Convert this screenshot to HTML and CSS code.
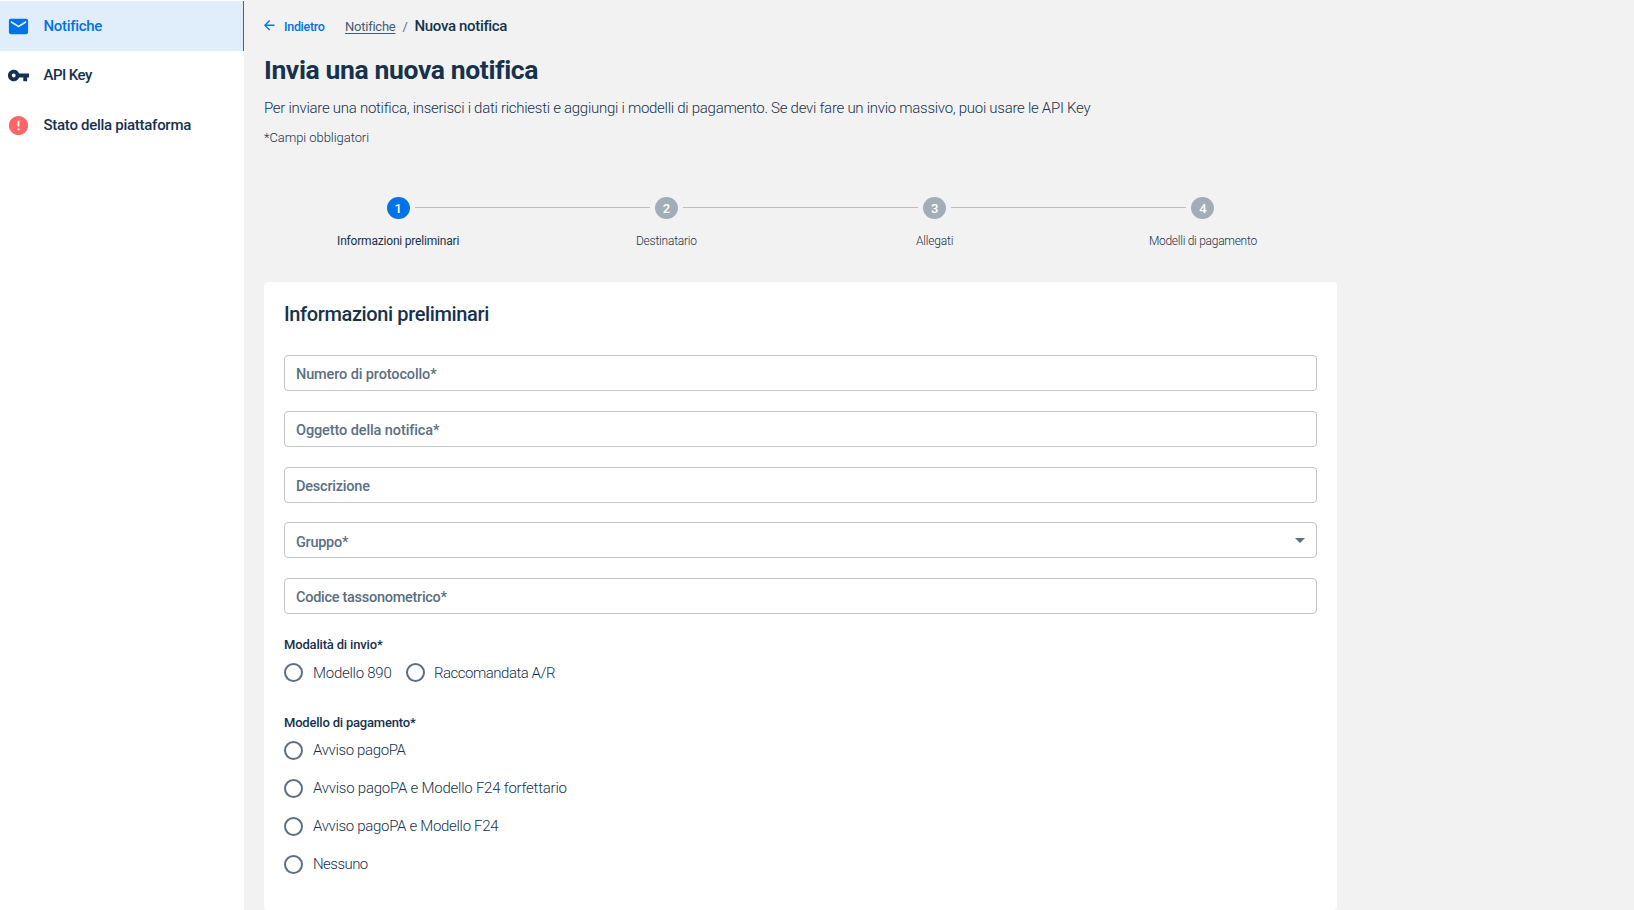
FILE: index.html
```
<!DOCTYPE html>
<html lang="it">
<head>
<meta charset="utf-8">
<title>Invia una nuova notifica</title>
<link rel="stylesheet" href="styles.css">
</head>
<body>
<div class="app">
  <nav class="sidebar">
    <a class="nav-item active">
      <svg class="nav-icon" viewBox="0 0 24 24"><path d="M20 4H4c-1.100 0-2 .9-2 2v12c0 1.100.9 2 2 2h16c1.100 0 2-.9 2-2V6c0-1.100-.9-2-2-2zm0 4-8 5-8-5V6l8 5 8-5z"/></svg>
      <span class="t-notifiche">Notifiche</span>
    </a>
    <a class="nav-item">
      <svg class="nav-icon" viewBox="0 0 24 24"><path d="M12.650 10C11.830 7.670 9.610 6 7 6c-3.310 0-6 2.690-6 6s2.690 6 6 6c2.610 0 4.830-1.670 5.650-4H17v4h4v-4h2v-4H12.650zM7 14c-1.100 0-2-.9-2-2s.9-2 2-2 2 .9 2 2-.9 2-2 2z"/></svg>
      <span class="t-api">API Key</span>
    </a>
    <a class="nav-item">
      <svg class="nav-icon alert" viewBox="0 0 24 24"><path d="M12 2C6.480 2 2 6.480 2 12s4.480 10 10 10 10-4.480 10-10S17.520 2 12 2zm1 15h-2v-2h2v2zm0-4h-2V7h2v6z"/></svg>
      <span class="t-stato">Stato della piattaforma</span>
    </a>
  </nav>
  <main class="content">
    <div class="crumbs">
      <a class="back"><svg class="back-icon" viewBox="4 4 16 16"><path d="M20 11H7.830l5.590-5.590L12 4l-8 8 8 8 1.410-1.410L7.830 13H20v-2z"/></svg><span>Indietro</span></a>
      <a class="crumb-link">Notifiche</a>
      <span class="crumb-sep">/</span>
      <span class="crumb-current">Nuova notifica</span>
    </div>
    <h1 class="title">Invia una nuova notifica</h1>
    <p class="intro">Per inviare una notifica, inserisci i dati richiesti e aggiungi i modelli di pagamento. Se devi fare un invio massivo, puoi usare le API Key</p>
    <p class="required">*Campi obbligatori</p>

    <div class="stepper">
      <div class="step current"><div class="rail"><i></i><b>1</b><i class="line"></i></div><span class="step-label">Informazioni preliminari</span></div>
      <div class="step"><div class="rail"><i class="line"></i><b>2</b><i class="line"></i></div><span class="step-label">Destinatario</span></div>
      <div class="step"><div class="rail"><i class="line"></i><b>3</b><i class="line"></i></div><span class="step-label">Allegati</span></div>
      <div class="step"><div class="rail"><i class="line"></i><b>4</b><i></i></div><span class="step-label t-modelli">Modelli di pagamento</span></div>
    </div>

    <section class="card">
      <h2 class="card-title">Informazioni preliminari</h2>
      <div class="fields">
        <div class="field t-num">Numero di protocollo*</div>
        <div class="field t-ogg">Oggetto della notifica*</div>
        <div class="field t-desc">Descrizione</div>
        <div class="field t-gruppo"><span>Gruppo*</span><svg class="caret" viewBox="0 0 10 5"><path d="M0 0h10L5 5z"/></svg></div>
        <div class="field t-cod">Codice tassonometrico*</div>
      </div>
      <div class="group-label t-mod">Modalità di invio*</div>
      <div class="radios row">
        <label class="radio t-890"><i class="dot"></i><span>Modello 890</span></label>
        <label class="radio t-racc"><i class="dot"></i><span>Raccomandata A/R</span></label>
      </div>
      <div class="group-label second">Modello di pagamento*</div>
      <div class="radios">
        <label class="radio t-avviso"><i class="dot"></i><span>Avviso pagoPA</span></label>
        <label class="radio t-forf"><i class="dot"></i><span>Avviso pagoPA e Modello F24 forfettario</span></label>
        <label class="radio t-f24"><i class="dot"></i><span>Avviso pagoPA e Modello F24</span></label>
        <label class="radio t-ness"><i class="dot"></i><span>Nessuno</span></label>
      </div>
    </section>
  </main>
</div>
</body>
</html>
```
FILE: styles.css
```
* { box-sizing: border-box; }
body { margin: 0; background: #f2f2f2; color: #17324d; font-family: Roboto, "Liberation Sans", sans-serif; font-size: 15px; white-space: nowrap; }
.app { display: flex; height: 910px; overflow: hidden; }

.sidebar { flex: none; width: 244px; padding-top: 1px; background: #fff; }
.nav-item { display: flex; align-items: center; gap: 13.5px; height: 49.5px; padding-left: 7px; font-weight: 500; letter-spacing: -.276px; }
.nav-item.active { height: 50px; background: #e0edfa; border-right: 1px solid #0073e6; color: #0073e6; }
.nav-icon { width: 23px; height: 23px; fill: currentColor; }
.nav-icon.alert { fill: #fe6666; }
.t-notifiche { letter-spacing: -.32px; }
.t-api { padding-bottom: 1px; letter-spacing: -.55px; }

.content { width: 1093px; padding: 0 0 0 20px; }
.crumbs { display: flex; align-items: center; height: 20px; margin-top: 16px; }
.back { display: flex; align-items: center; width: 81px; gap: 9.5px; color: #0073e6; font-size: 12.5px; font-weight: 500; letter-spacing: -.307px; }
.back-icon { width: 10.5px; height: 10.5px; margin-bottom: 1px; fill: currentColor; }
.crumb-link { font-size: 13px; letter-spacing: -.24px; color: #455b71; text-decoration: underline; text-underline-offset: 2px; }
.crumb-sep { font-size: 13px; width: 5px; margin: 0 7px; color: #5c6f82; }
.crumb-current { font-weight: 500; letter-spacing: -.33px; }
.title { margin: 17px 0 0; height: 34px; font-size: 26.5px; line-height: 34px; font-weight: 700; letter-spacing: -.37px; }
.intro { margin: 11px 0 0; font-weight: 300; line-height: 20px; letter-spacing: -.277px; }
.required { margin: 11px 0 0; font-size: 13px; line-height: 18px; font-weight: 300; letter-spacing: -.06px; }

.stepper { display: flex; width: 1073px; margin-top: 49px; }
.step { flex: 1; display: flex; flex-direction: column; align-items: center; }
.rail { display: flex; align-items: center; width: 100%; height: 23px; gap: 5px; }
.rail i { flex: 1; height: 1px; }
.rail .line { background: #bdbdbd; }
.rail b { width: 23px; height: 22px; border-radius: 50%; background: #a2adb8; color: #fff; font-size: 13px; line-height: 23px; font-weight: 500; text-align: center; }
.current .rail b { background: #0073e6; }
.step-label { margin-top: 13px; font-size: 12px; line-height: 18px; font-weight: 300; letter-spacing: -.21px; }
.t-modelli { letter-spacing: -.27px; }
.current .step-label { font-weight: 400; letter-spacing: -.197px; }

.card { width: 1073px; height: 628px; margin-top: 32px; padding: 19px 20px 20px; background: #fff; border-radius: 4px; }
.card-title { margin: 0; font-size: 20px; line-height: 26px; font-weight: 500; letter-spacing: -.37px; }
.fields { display: grid; gap: 19.75px; margin-top: 28px; }
.field { display: flex; align-items: center; justify-content: space-between; height: 36px; padding: 2px 12px 0 11px; border: 1px solid #c4c4c4; border-radius: 4px; color: #5c6f82; font-size: 14.5px; font-weight: 500; }
.field.t-ogg, .field.t-desc { padding-top: 3px; }
.field.t-gruppo { padding-top: 1px; }
.t-gruppo span { padding-top: 3px; }
.caret { width: 10px; height: 5px; margin-right: -.5px; fill: #5c6f82; }
.t-num { letter-spacing: -.12px; }
.t-ogg { letter-spacing: -.104px; }
.t-desc { letter-spacing: -.22px; }
.t-gruppo, .t-cod { letter-spacing: -.28px; }
.group-label { margin-top: 22px; font-size: 13px; line-height: 18px; font-weight: 500; letter-spacing: -.2px; }
.t-mod { letter-spacing: -.173px; }
.group-label.second { margin-top: 23px; }
.radios { display: flex; flex-direction: column; margin-top: -1px; }
.radios.row { flex-direction: row; gap: 14px; }
.radios.row span { padding-top: 1px; }
.radio { display: flex; align-items: center; gap: 10px; height: 38px; font-weight: 300; }
.dot { flex: none; width: 19px; height: 19px; border: 2px solid #5c6f82; border-radius: 50%; }
.t-890 { letter-spacing: -.25px; }
.t-racc { gap: 9.5px; letter-spacing: -.49px; }
.t-avviso { letter-spacing: -.35px; }
.t-forf { letter-spacing: -.235px; }
.t-f24 { letter-spacing: -.31px; }
.t-ness { letter-spacing: -.54px; }
```
